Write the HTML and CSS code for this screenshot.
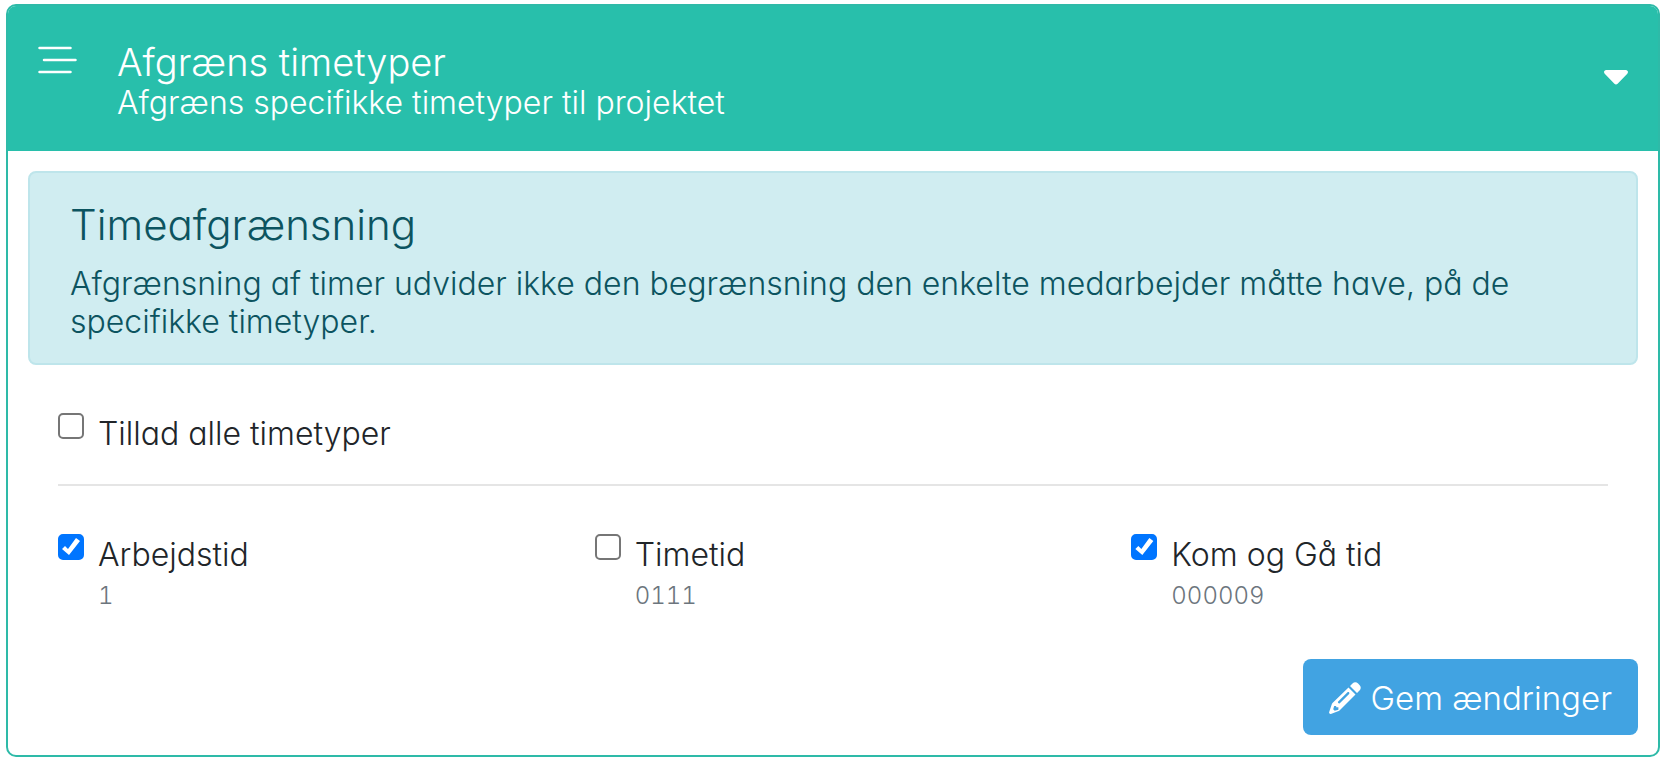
FILE: index.html
```html
<!DOCTYPE html>
<html lang="da">
<head>
    <meta charset="UTF-8">
    <meta name="viewport" content="width=device-width, initial-scale=1.0">
    <title>Afgræns timetyper</title>
    <link rel="stylesheet" href="styles.css">
</head>
<body>
    <form class="card">
        <header class="card-header">
            <svg class="menu-icon" viewBox="0 0 40 28" aria-hidden="true">
                <path d="M1.500 2h31M6 14h31.500M1.500 26h31"/>
            </svg>
            <div class="header-text">
                <h1>Afgræns timetyper</h1>
                <p>Afgræns specifikke timetyper til projektet</p>
            </div>
            <button type="button" class="toggle" aria-label="Fold sammen">
                <svg viewBox="0 0 24 15" aria-hidden="true">
                    <path d="M2.200 0h19.600c2 0 2.900 2.300 1.500 3.700l-9.700 10c-.9.9-2.300.9-3.200 0l-9.700-10C-.7 2.300.2 0 2.200 0z"/>
                </svg>
            </button>
        </header>

        <div class="card-body">
            <div class="alert">
                <h2>Timeafgrænsning</h2>
                <p>Afgrænsning af timer udvider ikke den begrænsning den enkelte medarbejder måtte have, på de specifikke timetyper.</p>
            </div>

            <div class="allow-all">
                <div class="check">
                    <input type="checkbox" id="allowAll">
                    <label for="allowAll">Tillad alle timetyper</label>
                </div>
            </div>

            <div class="types">
                <div class="check">
                    <input type="checkbox" id="type1" checked>
                    <label for="type1">Arbejdstid <small>1</small></label>
                </div>
                <div class="check">
                    <input type="checkbox" id="type2">
                    <label for="type2">Timetid <small>0111</small></label>
                </div>
                <div class="check">
                    <input type="checkbox" id="type3" checked>
                    <label for="type3">Kom og Gå tid <small>000009</small></label>
                </div>
            </div>

            <div class="actions">
                <button type="submit" class="button">
                    <svg viewBox="0 0 32 32" aria-hidden="true">
                        <path d="M21 4l2.500-2.500c1.700-1.700 4-1.600 5.600 0l1.400 1.400c1.600 1.600 1.700 3.900 0 5.600L28 11z"/>
                        <path fill-rule="evenodd" d="M19.500 5.500l7 7L10.500 28.500c-.4.400-.9.700-1.500.8L1.800 31.900C.8 32.100-.1 31.200.1 30.200L2.700 22.500c.1-.6.400-1.100.8-1.500zM18.500 10.300L9.200 19.600c-.9 1 .6 2.500 1.600 1.600l9.300-9.300c.9-1-.6-2.500-1.600-1.600zM5.200 24l-1 3.200 1.500 1.500 3.700-1v-2.500H7.200V24z"/>
                    </svg>
                    Gem ændringer
                </button>
            </div>
        </div>
    </form>
</body>
</html>
```
FILE: styles.css
```css
* {
    box-sizing: border-box;
}
body {
    margin: 4px 6px;
    font-family: Inter, sans-serif;
    font-size: 32px;
    font-weight: 300;
    font-feature-settings: "cv11"; /* single-storey a */
    line-height: 38px;
    color: #212529;
    background-color: #fff;
}
h1, h2, p {
    margin: 0;
    font-weight: 300;
}
.card {
    border: 2px solid #2ebaa8;
    border-radius: 10px;
    overflow: hidden;
}
.card-header {
    display: flex;
    align-items: flex-start;
    padding: 34px 30px 29px;
    color: #fff;
    background-color: #28bfab;
}
.menu-icon {
    width: 40px;
    height: 28px;
    margin: 6px 39px 0 0;
    fill: none;
    stroke: #fff;
    stroke-width: 2.5;
    stroke-linecap: round;
}
.header-text {
    flex: 1;
}
h1 {
    font-size: 38px;
    line-height: 44px;
}
.toggle {
    margin-top: 30px;
    padding: 0;
    border: none;
    background: none;
    cursor: pointer;
}
.toggle svg {
    display: block;
    width: 24px;
    height: 15px;
    fill: #fff;
}
.card-body {
    padding: 20px;
}
.alert {
    padding: 28px 40px 22px;
    border: 2px solid #bee5eb;
    border-radius: 8px;
    color: #0c5460;
    background-color: #d0edf1;
}
h2 {
    margin-bottom: 16px;
    font-size: 42px;
    line-height: 48px;
}
.allow-all {
    margin: 0 30px;
    padding: 48px 0 31px;
    border-bottom: 2px solid #e5e5e5;
}
.check {
    display: flex;
    align-items: flex-start;
    gap: 14px;
}
.check input {
    flex: none;
    width: 26px;
    height: 26px;
    margin: 0;
    border: 2px solid #767676;
    border-radius: 5px;
    background-color: #fff;
    appearance: none;
}
.check input:checked {
    border-color: #0075ff;
    background-color: #0075ff;
}
/* the tick */
.check input:checked::before {
    content: "";
    display: block;
    width: 22px;
    height: 22px;
    background-color: #fff;
    clip-path: polygon(2px 13px, 5px 10px, 8px 13px, 16px 2px, 20px 5px, 9px 19px);
}
.check label {
    padding-top: 2px;
}
.check small {
    display: block;
    padding-top: 3px;
    font-size: 24px;
    font-variant-numeric: tabular-nums;
    color: #6c757d;
}
.types {
    display: grid;
    grid-template-columns: repeat(3, 1fr);
    padding: 48px 0 44px;
}
.types .check {
    padding: 0 30px;
}
.actions {
    display: flex;
    justify-content: flex-end;
}
.button {
    display: flex;
    align-items: center;
    gap: 10px;
    padding: 20px 26px 18px;
    border: none;
    border-radius: 8px;
    font: inherit;
    font-size: 33px;
    color: #fff;
    background-color: #41a3e2;
    cursor: pointer;
}
.button svg {
    width: 32px;
    height: 32px;
    fill: #fff;
}
```
